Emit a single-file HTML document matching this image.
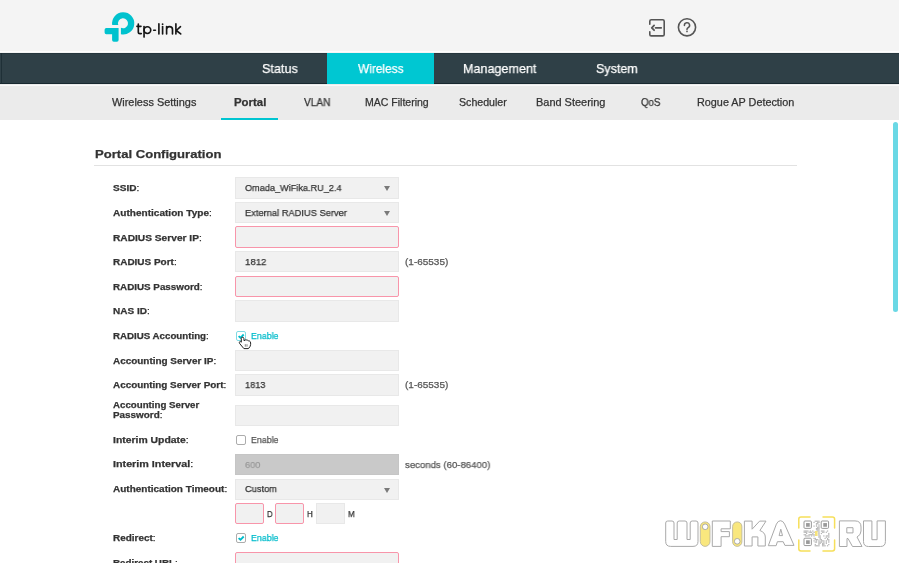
<!DOCTYPE html>
<html><head><meta charset="utf-8">
<style>
*{margin:0;padding:0;box-sizing:border-box}
html,body{width:899px;height:563px;overflow:hidden;background:#fff;font-family:"Liberation Sans",sans-serif}
.a{position:absolute}
.t{position:absolute;white-space:nowrap;transform-origin:0 0;-webkit-text-stroke:0.25px currentColor;will-change:transform}
.t .c{font-weight:400}
#hdr{left:0;top:0;width:899px;height:53px;background:#f4f4f4}
#nav{left:0;top:53px;width:899px;height:31px;background:#2f4047}
#navsel{left:327px;top:53px;width:107px;height:31px;background:#00c7d2}
#sub{left:0;top:84px;width:899px;height:36px;background:#ebebeb}
#ul{left:221px;top:118px;width:57px;height:2px;background:#00c5d1}
#hline{left:94px;top:165px;width:703px;height:1px;background:#e2e2e2}
.in{position:absolute;left:235px;width:164px;height:21.4px;background:#f1f1f1;border:1px solid #e8e8e8}
.in.err{border:1.2px solid #f895aa;border-radius:2px}
.sel:after{content:"";position:absolute;left:148.3px;top:8.2px;border-left:3.3px solid transparent;border-right:3.3px solid transparent;border-top:5.4px solid #7a7a7a}
.cb{position:absolute;left:236.2px;width:10px;height:10px;border:1.2px solid #acacac;border-radius:2px;background:#fff}
#scroll{left:893px;top:122px;width:5px;height:190px;background:#6ad8e5;border-radius:3px}
</style></head><body>
<div id="hdr" class="a"></div>
<div id="nav" class="a"></div>
<div id="navsel" class="a"></div>
<div id="sub" class="a"></div>
<div id="ul" class="a"></div>
<div id="hline" class="a"></div>
<div class="a" style="left:0;top:51px;width:899px;height:1px;background:#fdfdfd"></div>
<div class="a" style="left:0;top:53px;width:327px;height:1px;background:#22333b;opacity:.7"></div><div class="a" style="left:434px;top:53px;width:465px;height:1px;background:#22333b;opacity:.7"></div>
<div class="a" style="left:0;top:83px;width:327px;height:1px;background:#13232b;opacity:.8"></div><div class="a" style="left:434px;top:83px;width:465px;height:1px;background:#13232b;opacity:.8"></div>
<div class="a" style="left:0;top:85px;width:899px;height:1px;background:#f9f9f9"></div>
<div class="a" style="left:1px;top:53px;width:1px;height:31px;background:#1c2c33;opacity:.8"></div>

<!-- logo -->
<svg class="a" style="left:100px;top:8px" width="90" height="40" viewBox="0 0 90 40">
  <path d="M12.2 17 A11.1 11.1 0 1 1 20.9 26.25 V19.85 A5 5 0 1 0 18.3 17 Z" fill="#00c2ce"/>
  <path d="M6.3 20 H18.6 V32 Q18.6 33.7 16.9 33.7 H13.8 Q12.1 33.7 12.1 32 V26.3 H6.3 Q4.6 26.3 4.6 24.6 V21.7 Q4.6 20 6.3 20 Z" fill="#00c2ce"/>
  <g fill="none" stroke="#151515" stroke-width="1.65" stroke-linecap="round" stroke-linejoin="round">
    <path d="M38.3 16.1 V23.9 a1.7 1.7 0 0 0 1.7 1.7 h1.3 M36.9 18.3 H41"/>
    <circle cx="47.4" cy="22.1" r="3.35"/>
    <path d="M44.05 18.6 V29.1"/>
    <path d="M53.7 22.2 H55.4"/>
    <path d="M58.9 15.9 V25.9"/>
    <path d="M62.6 18.6 V25.9"/>
    <path d="M66.6 18.6 V25.9 M66.6 21.6 a2.95 2.95 0 0 1 5.9 0 V25.9"/>
    <path d="M75.9 15.9 V25.9 M80.5 18.7 L76.3 22.5 L80.7 25.9"/>
  </g>
  <circle cx="62.6" cy="16.2" r="0.9" fill="#151515"/>
</svg>

<!-- header icons -->
<svg class="a" style="left:645px;top:15px" width="60" height="26" viewBox="0 0 60 26">
  <path d="M4.8 9.2 V6.2 a1.5 1.5 0 0 1 1.5 -1.5 H17.7 a1.5 1.5 0 0 1 1.5 1.5 V19.4 a1.5 1.5 0 0 1 -1.5 1.5 H6.3 a1.5 1.5 0 0 1 -1.5 -1.5 V16.8" fill="none" stroke="#555" stroke-width="1.6" stroke-linecap="round"/>
  <path d="M10.6 12.8 H16.2 M9.1 10.4 L6.8 12.8 L9.1 15.2" fill="none" stroke="#555" stroke-width="1.8" stroke-linecap="round" stroke-linejoin="round"/>
  <circle cx="42" cy="12.3" r="8.6" fill="none" stroke="#555" stroke-width="1.6"/>
  <path d="M39.4 10.4 a2.6 2.6 0 1 1 3.7 2.3 c-0.7 0.35 -1.1 0.8 -1.1 1.5 v0.3" fill="none" stroke="#555" stroke-width="1.5" stroke-linecap="round"/>
  <circle cx="42" cy="16.4" r="0.85" fill="#555"/>
</svg>

<!-- inputs -->
<div class="in sel" style="top:177.2px"></div>
<div class="in sel" style="top:201.9px"></div>
<div class="in err" style="top:226.3px"></div>
<div class="in" style="top:251px"></div>
<div class="in err" style="top:275.6px"></div>
<div class="in" style="top:300.4px"></div>
<div class="cb" style="top:330.5px;border-color:#80dbe4"></div>
<div class="in" style="top:349.8px"></div>
<div class="in" style="top:374.4px"></div>
<div class="in" style="top:404.6px"></div>
<div class="cb" style="top:434.5px"></div>
<div class="in" style="top:453.8px;background:#c9c9c9;border-color:#c5c5c5"></div>
<div class="in sel" style="top:478.9px"></div>
<div class="in err" style="top:502.9px;width:28.6px"></div>
<div class="in err" style="top:502.9px;left:275.2px;width:28.5px"></div>
<div class="in" style="top:502.9px;left:316.1px;width:28.5px"></div>
<div class="cb" style="top:533px"></div>
<div class="in err" style="top:552.2px"></div>

<!-- checkmarks -->
<svg class="a" style="left:236px;top:331px" width="10" height="10" viewBox="0 0 10 10"><path d="M2.6 5.1 l1.9 1.7 l3.2 -3.3" fill="none" stroke="#00bccb" stroke-width="1.9"/></svg>
<svg class="a" style="left:236px;top:533px" width="10" height="10" viewBox="0 0 10 10"><path d="M2.6 5.1 l1.9 1.7 l3.2 -3.3" fill="none" stroke="#00bccb" stroke-width="1.9"/></svg>

<div id="scroll" class="a"></div>
<!-- watermark -->
<svg class="a" style="left:0;top:0" width="899" height="563" viewBox="0 0 899 563">
 <g fill="#fff" stroke="#a9a9a9" stroke-width="1" stroke-linejoin="round">
  <path d="M667.7 521 H672 Q674 521 674 523 V539.5 H677.2 V523 Q677.2 521 679.2 521 H685 Q687 521 687 523 V539.5 H690.2 V523 Q690.2 521 692.2 521 H696 Q698 521 698 523 V541.4 Q698 546.4 693 546.4 H670.7 Q665.7 546.4 665.7 541.4 V523 Q665.7 521 667.7 521 Z"/>
  <path d="M712.3 521 H730.3 V528.8 H721.1 V531.6 H729.4 V536.7 H721.1 V546.4 H712.3 Z"/>
  <path d="M744.4 521.1 H752.1 V529.2 L759.6 521.1 H766 L759.9 530.5 Q765.3 532.5 765.3 537 V546 H757.9 V536.9 H752.1 V546 H744.4 Z"/>
  <path d="M768.3 545.7 L776.4 524.1 Q778 520.7 780.5 520.7 Q783 520.7 784.6 524.1 L794 545.4 H784.9 L783.2 541.7 H777.4 L776.1 545.7 Z M779.1 535.6 L780.8 529.2 L782.5 535.6 Z"/>
  <path d="M839.4 520.9 H855 Q861 520.9 861 527 V531 Q861 535 857 537 L862 546.5 H852.5 L848 538.5 H847 V546.5 H839.4 Z M846.8 527.7 V532.9 H853 V527.7 Z"/>
  <path d="M863.5 520.9 H871.9 V539.7 H877.1 V520.9 H885.4 V541.5 Q885.4 546.5 880.4 546.5 H868.5 Q863.5 546.5 863.5 541.5 Z"/>
 </g>
 <g fill="#f9e77e" stroke="#b5b09a" stroke-width="0.8">
  <rect x="700.3" y="521.9" width="9.7" height="24.5" rx="4.85"/>
  <rect x="732.6" y="521.9" width="9.3" height="24.5" rx="4.65"/>
 </g>
 <circle cx="705.2" cy="526.8" r="2.8" fill="#fff" stroke="#9a9a9a" stroke-width="0.8"/>
 <circle cx="737.2" cy="541.3" r="2.8" fill="#fff" stroke="#9a9a9a" stroke-width="0.8"/>
 <g fill="none" stroke="#f6df5a" stroke-width="1.5" stroke-linecap="round">
  <path d="M798.8 528 V519 Q798.8 516.9 801 516.9 H810"/>
  <path d="M823 516.9 H832.4 Q834.6 516.9 834.6 519 V528"/>
  <path d="M798.8 540 V548.8 Q798.8 551 801 551 H810"/>
  <path d="M823 551 H832.4 Q834.6 551 834.6 548.8 V540"/>
 </g>
 <g fill="#b5b5b5"><rect x="804.00" y="521.00" width="7.37" height="7.37" rx="1" fill="none" stroke="#8c8c8c" stroke-width="0.9"/><rect x="806.06" y="523.06" width="3.69" height="3.69" fill="#9a9a9a"/><rect x="821.20" y="521.00" width="7.37" height="7.37" rx="1" fill="none" stroke="#8c8c8c" stroke-width="0.9"/><rect x="823.26" y="523.06" width="3.69" height="3.69" fill="#9a9a9a"/><rect x="804.00" y="538.20" width="7.37" height="7.37" rx="1" fill="none" stroke="#8c8c8c" stroke-width="0.9"/><rect x="806.06" y="540.26" width="3.69" height="3.69" fill="#9a9a9a"/><rect x="803.60" y="530.43" width="1.23" height="1.23"/><rect x="803.60" y="531.66" width="1.23" height="1.23"/><rect x="803.60" y="534.11" width="1.23" height="1.23"/><rect x="804.83" y="530.43" width="1.23" height="1.23"/><rect x="804.83" y="531.66" width="1.23" height="1.23"/><rect x="804.83" y="534.11" width="1.23" height="1.23"/><rect x="804.83" y="535.34" width="1.23" height="1.23"/><rect x="806.06" y="530.43" width="1.23" height="1.23"/><rect x="806.06" y="531.66" width="1.23" height="1.23"/><rect x="806.06" y="532.89" width="1.23" height="1.23"/><rect x="806.06" y="535.34" width="1.23" height="1.23"/><rect x="807.29" y="530.43" width="1.23" height="1.23"/><rect x="807.29" y="535.34" width="1.23" height="1.23"/><rect x="808.51" y="531.66" width="1.23" height="1.23"/><rect x="808.51" y="534.11" width="1.23" height="1.23"/><rect x="808.51" y="535.34" width="1.23" height="1.23"/><rect x="809.74" y="530.43" width="1.23" height="1.23"/><rect x="809.74" y="531.66" width="1.23" height="1.23"/><rect x="809.74" y="534.11" width="1.23" height="1.23"/><rect x="810.97" y="531.66" width="1.23" height="1.23"/><rect x="810.97" y="534.11" width="1.23" height="1.23"/><rect x="810.97" y="535.34" width="1.23" height="1.23"/><rect x="812.20" y="530.43" width="1.23" height="1.23"/><rect x="812.20" y="532.89" width="1.23" height="1.23"/><rect x="812.20" y="534.11" width="1.23" height="1.23"/><rect x="813.43" y="521.83" width="1.23" height="1.23"/><rect x="813.43" y="525.51" width="1.23" height="1.23"/><rect x="813.43" y="531.66" width="1.23" height="1.23"/><rect x="813.43" y="534.11" width="1.23" height="1.23"/><rect x="813.43" y="535.34" width="1.23" height="1.23"/><rect x="813.43" y="537.80" width="1.23" height="1.23"/><rect x="813.43" y="540.26" width="1.23" height="1.23"/><rect x="814.66" y="520.60" width="1.23" height="1.23"/><rect x="814.66" y="531.66" width="1.23" height="1.23"/><rect x="814.66" y="537.80" width="1.23" height="1.23"/><rect x="814.66" y="539.03" width="1.23" height="1.23"/><rect x="814.66" y="541.49" width="1.23" height="1.23"/><rect x="814.66" y="543.94" width="1.23" height="1.23"/><rect x="814.66" y="545.17" width="1.23" height="1.23"/><rect x="815.89" y="520.60" width="1.23" height="1.23"/><rect x="815.89" y="523.06" width="1.23" height="1.23"/><rect x="815.89" y="524.29" width="1.23" height="1.23"/><rect x="815.89" y="525.51" width="1.23" height="1.23"/><rect x="815.89" y="527.97" width="1.23" height="1.23"/><rect x="815.89" y="529.20" width="1.23" height="1.23"/><rect x="815.89" y="539.03" width="1.23" height="1.23"/><rect x="815.89" y="540.26" width="1.23" height="1.23"/><rect x="815.89" y="541.49" width="1.23" height="1.23"/><rect x="815.89" y="545.17" width="1.23" height="1.23"/><rect x="817.11" y="520.60" width="1.23" height="1.23"/><rect x="817.11" y="521.83" width="1.23" height="1.23"/><rect x="817.11" y="523.06" width="1.23" height="1.23"/><rect x="817.11" y="526.74" width="1.23" height="1.23"/><rect x="817.11" y="527.97" width="1.23" height="1.23"/><rect x="817.11" y="529.20" width="1.23" height="1.23"/><rect x="817.11" y="530.43" width="1.23" height="1.23"/><rect x="817.11" y="539.03" width="1.23" height="1.23"/><rect x="817.11" y="545.17" width="1.23" height="1.23"/><rect x="818.34" y="520.60" width="1.23" height="1.23"/><rect x="818.34" y="521.83" width="1.23" height="1.23"/><rect x="818.34" y="524.29" width="1.23" height="1.23"/><rect x="818.34" y="525.51" width="1.23" height="1.23"/><rect x="818.34" y="526.74" width="1.23" height="1.23"/><rect x="818.34" y="527.97" width="1.23" height="1.23"/><rect x="818.34" y="529.20" width="1.23" height="1.23"/><rect x="818.34" y="530.43" width="1.23" height="1.23"/><rect x="818.34" y="531.66" width="1.23" height="1.23"/><rect x="818.34" y="532.89" width="1.23" height="1.23"/><rect x="818.34" y="534.11" width="1.23" height="1.23"/><rect x="818.34" y="535.34" width="1.23" height="1.23"/><rect x="818.34" y="536.57" width="1.23" height="1.23"/><rect x="818.34" y="540.26" width="1.23" height="1.23"/><rect x="818.34" y="541.49" width="1.23" height="1.23"/><rect x="818.34" y="542.71" width="1.23" height="1.23"/><rect x="818.34" y="543.94" width="1.23" height="1.23"/><rect x="818.34" y="545.17" width="1.23" height="1.23"/><rect x="819.57" y="535.34" width="1.23" height="1.23"/><rect x="819.57" y="536.57" width="1.23" height="1.23"/><rect x="819.57" y="537.80" width="1.23" height="1.23"/><rect x="819.57" y="539.03" width="1.23" height="1.23"/><rect x="819.57" y="541.49" width="1.23" height="1.23"/><rect x="819.57" y="542.71" width="1.23" height="1.23"/><rect x="820.80" y="530.43" width="1.23" height="1.23"/><rect x="820.80" y="532.89" width="1.23" height="1.23"/><rect x="820.80" y="539.03" width="1.23" height="1.23"/><rect x="820.80" y="540.26" width="1.23" height="1.23"/><rect x="820.80" y="541.49" width="1.23" height="1.23"/><rect x="822.03" y="530.43" width="1.23" height="1.23"/><rect x="822.03" y="531.66" width="1.23" height="1.23"/><rect x="822.03" y="540.26" width="1.23" height="1.23"/><rect x="822.03" y="542.71" width="1.23" height="1.23"/><rect x="822.03" y="543.94" width="1.23" height="1.23"/><rect x="822.03" y="545.17" width="1.23" height="1.23"/><rect x="823.26" y="530.43" width="1.23" height="1.23"/><rect x="823.26" y="531.66" width="1.23" height="1.23"/><rect x="823.26" y="535.34" width="1.23" height="1.23"/><rect x="823.26" y="540.26" width="1.23" height="1.23"/><rect x="823.26" y="541.49" width="1.23" height="1.23"/><rect x="823.26" y="542.71" width="1.23" height="1.23"/><rect x="823.26" y="543.94" width="1.23" height="1.23"/><rect x="823.26" y="545.17" width="1.23" height="1.23"/><rect x="824.49" y="537.80" width="1.23" height="1.23"/><rect x="824.49" y="545.17" width="1.23" height="1.23"/><rect x="825.71" y="531.66" width="1.23" height="1.23"/><rect x="825.71" y="535.34" width="1.23" height="1.23"/><rect x="825.71" y="536.57" width="1.23" height="1.23"/><rect x="825.71" y="540.26" width="1.23" height="1.23"/><rect x="825.71" y="541.49" width="1.23" height="1.23"/><rect x="825.71" y="542.71" width="1.23" height="1.23"/><rect x="826.94" y="530.43" width="1.23" height="1.23"/><rect x="826.94" y="535.34" width="1.23" height="1.23"/><rect x="826.94" y="537.80" width="1.23" height="1.23"/><rect x="826.94" y="539.03" width="1.23" height="1.23"/><rect x="826.94" y="545.17" width="1.23" height="1.23"/><rect x="828.17" y="532.89" width="1.23" height="1.23"/><rect x="828.17" y="534.11" width="1.23" height="1.23"/><rect x="828.17" y="535.34" width="1.23" height="1.23"/><rect x="828.17" y="536.57" width="1.23" height="1.23"/><rect x="828.17" y="539.03" width="1.23" height="1.23"/><rect x="828.17" y="540.26" width="1.23" height="1.23"/><rect x="828.17" y="541.49" width="1.23" height="1.23"/><rect x="828.17" y="543.94" width="1.23" height="1.23"/></g>
 <rect x="815" y="531" width="2.6" height="5" fill="#f6e37a"/>
</svg>
<!-- cursor -->
<svg class="a" style="left:230px;top:326px" width="26" height="26" viewBox="0 0 26 26">
  <path d="M12.2 11.3 Q13.9 11.2 13.9 12.5 L14.1 14.8 Q15.2 13.6 16.2 13.9 Q17.6 14 18.5 14.8 Q19.8 14.9 20.3 15.7 Q20.8 16.8 20.6 18.5 Q20.3 20.5 19.4 21.7 L18 22.6 L13.9 22.6 L9.7 17.6 Q9 16.4 9.6 15.8 Q10.4 15.2 11.3 16.2 L11.3 12.5 Q11.3 11.4 12.2 11.3 Z" fill="#fff" stroke="#222" stroke-width="1" stroke-linejoin="round"/>
  <path d="M15.3 18.2 v2.5 M17 18.2 v2.5" stroke="#666" stroke-width="0.8"/>
</svg>


<div class="t" style="left:261.82px;top:62.43px;font-size:13.2px;line-height:13.2px;font-weight:400;color:#fff;transform:scaleX(0.9595);">Status</div>
<div class="t" style="left:357.91px;top:62.43px;font-size:13.2px;line-height:13.2px;font-weight:400;color:#fff;transform:scaleX(0.9022);">Wireless</div>
<div class="t" style="left:462.87px;top:62.43px;font-size:13.2px;line-height:13.2px;font-weight:400;color:#fff;transform:scaleX(0.9535);">Management</div>
<div class="t" style="left:596.02px;top:62.43px;font-size:13.2px;line-height:13.2px;font-weight:400;color:#fff;transform:scaleX(0.9473);">System</div>
<div class="t" style="left:111.83px;top:98.20px;font-size:10.4px;line-height:10.4px;font-weight:400;color:#333;transform:scaleX(1.0508);">Wireless Settings</div>
<div class="t" style="left:233.64px;top:98.20px;font-size:10.4px;line-height:10.4px;font-weight:700;color:#333;transform:scaleX(1.0969);">Portal</div>
<div class="t" style="left:303.72px;top:98.20px;font-size:10.4px;line-height:10.4px;font-weight:400;color:#333;transform:scaleX(0.9706);">VLAN</div>
<div class="t" style="left:364.83px;top:98.20px;font-size:10.4px;line-height:10.4px;font-weight:400;color:#333;transform:scaleX(1.0126);">MAC Filtering</div>
<div class="t" style="left:459.43px;top:98.20px;font-size:10.4px;line-height:10.4px;font-weight:400;color:#333;transform:scaleX(1.0215);">Scheduler</div>
<div class="t" style="left:535.63px;top:98.20px;font-size:10.4px;line-height:10.4px;font-weight:400;color:#333;transform:scaleX(1.0539);">Band Steering</div>
<div class="t" style="left:640.52px;top:98.20px;font-size:10.4px;line-height:10.4px;font-weight:400;color:#333;transform:scaleX(0.9379);">QoS</div>
<div class="t" style="left:697.33px;top:98.20px;font-size:10.4px;line-height:10.4px;font-weight:400;color:#333;transform:scaleX(1.0421);">Rogue AP Detection</div>
<div class="t" style="left:94.84px;top:148.18px;font-size:11.6px;line-height:11.6px;font-weight:700;color:#333;transform:scaleX(1.1280);">Portal Configuration</div>
<div class="t" style="left:113.23px;top:183.44px;font-size:9.4px;line-height:9.4px;font-weight:700;color:#333;transform:scaleX(1.0733);">SSID<span class="c">:</span></div>
<div class="t" style="left:113.23px;top:208.04px;font-size:9.4px;line-height:9.4px;font-weight:700;color:#333;transform:scaleX(1.0735);">Authentication Type<span class="c">:</span></div>
<div class="t" style="left:113.24px;top:232.64px;font-size:9.4px;line-height:9.4px;font-weight:700;color:#333;transform:scaleX(1.0854);">RADIUS Server IP<span class="c">:</span></div>
<div class="t" style="left:113.23px;top:257.24px;font-size:9.4px;line-height:9.4px;font-weight:700;color:#333;transform:scaleX(1.0631);">RADIUS Port<span class="c">:</span></div>
<div class="t" style="left:113.23px;top:281.84px;font-size:9.4px;line-height:9.4px;font-weight:700;color:#333;transform:scaleX(1.0472);">RADIUS Password<span class="c">:</span></div>
<div class="t" style="left:113.23px;top:306.44px;font-size:9.4px;line-height:9.4px;font-weight:700;color:#333;transform:scaleX(1.0669);">NAS ID<span class="c">:</span></div>
<div class="t" style="left:113.23px;top:331.04px;font-size:9.4px;line-height:9.4px;font-weight:700;color:#333;transform:scaleX(1.0363);">RADIUS Accounting<span class="c">:</span></div>
<div class="t" style="left:113.23px;top:355.64px;font-size:9.4px;line-height:9.4px;font-weight:700;color:#333;transform:scaleX(1.0591);">Accounting Server IP<span class="c">:</span></div>
<div class="t" style="left:113.23px;top:380.24px;font-size:9.4px;line-height:9.4px;font-weight:700;color:#333;transform:scaleX(1.0546);">Accounting Server Port<span class="c">:</span></div>
<div class="t" style="left:113.24px;top:434.94px;font-size:9.4px;line-height:9.4px;font-weight:700;color:#333;transform:scaleX(1.1092);">Interim Update<span class="c">:</span></div>
<div class="t" style="left:113.24px;top:459.24px;font-size:9.4px;line-height:9.4px;font-weight:700;color:#333;transform:scaleX(1.1474);">Interim Interval<span class="c">:</span></div>
<div class="t" style="left:113.23px;top:483.74px;font-size:9.4px;line-height:9.4px;font-weight:700;color:#333;transform:scaleX(1.0659);">Authentication Timeout<span class="c">:</span></div>
<div class="t" style="left:113.23px;top:533.34px;font-size:9.4px;line-height:9.4px;font-weight:700;color:#333;transform:scaleX(1.0613);">Redirect<span class="c">:</span></div>
<div class="t" style="left:113.23px;top:557.94px;font-size:9.4px;line-height:9.4px;font-weight:700;color:#333;transform:scaleX(1.0432);">Redirect URL<span class="c">:</span></div>
<div class="t" style="left:113.23px;top:399.64px;font-size:9.4px;line-height:9.4px;font-weight:700;color:#333;transform:scaleX(1.0351);">Accounting Server</div>
<div class="t" style="left:113.23px;top:409.64px;font-size:9.4px;line-height:9.4px;font-weight:700;color:#333;transform:scaleX(1.0550);">Password<span class="c">:</span></div>
<div class="t" style="left:245.12px;top:182.90px;font-size:9.8px;line-height:9.8px;font-weight:400;color:#333;transform:scaleX(0.9334);">Omada_WiFika.RU_2.4</div>
<div class="t" style="left:245.12px;top:207.50px;font-size:9.8px;line-height:9.8px;font-weight:400;color:#333;transform:scaleX(0.9497);">External RADIUS Server</div>
<div class="t" style="left:245.12px;top:256.90px;font-size:9.8px;line-height:9.8px;font-weight:400;color:#333;transform:scaleX(0.9817);">1812</div>
<div class="t" style="left:405.03px;top:256.90px;font-size:9.8px;line-height:9.8px;font-weight:400;color:#555;transform:scaleX(1.0196);">(1-65535)</div>
<div class="t" style="left:250.81px;top:330.70px;font-size:9.8px;line-height:9.8px;font-weight:400;color:#00bccb;transform:scaleX(0.9008);">Enable</div>
<div class="t" style="left:245.12px;top:379.90px;font-size:9.8px;line-height:9.8px;font-weight:400;color:#333;transform:scaleX(0.9382);">1813</div>
<div class="t" style="left:405.03px;top:379.90px;font-size:9.8px;line-height:9.8px;font-weight:400;color:#555;transform:scaleX(1.0196);">(1-65535)</div>
<div class="t" style="left:250.81px;top:434.60px;font-size:9.8px;line-height:9.8px;font-weight:400;color:#555;transform:scaleX(0.9008);">Enable</div>
<div class="t" style="left:245.12px;top:459.60px;font-size:9.8px;line-height:9.8px;font-weight:400;color:#9a9a9a;transform:scaleX(0.9331);">600</div>
<div class="t" style="left:405.02px;top:459.60px;font-size:9.8px;line-height:9.8px;font-weight:400;color:#555;transform:scaleX(0.9790);">seconds (60-86400)</div>
<div class="t" style="left:245.12px;top:483.60px;font-size:9.8px;line-height:9.8px;font-weight:400;color:#333;transform:scaleX(0.9456);">Custom</div>
<div class="t" style="left:266.90px;top:509.30px;font-size:9.8px;line-height:9.8px;font-weight:400;color:#333;transform:scaleX(0.7862);">D</div>
<div class="t" style="left:307.00px;top:509.30px;font-size:9.8px;line-height:9.8px;font-weight:400;color:#333;transform:scaleX(0.8138);">H</div>
<div class="t" style="left:347.60px;top:509.30px;font-size:9.8px;line-height:9.8px;font-weight:400;color:#333;transform:scaleX(0.8242);">M</div>
<div class="t" style="left:250.81px;top:533.00px;font-size:9.8px;line-height:9.8px;font-weight:400;color:#00bccb;transform:scaleX(0.9008);">Enable</div>
</body></html>
